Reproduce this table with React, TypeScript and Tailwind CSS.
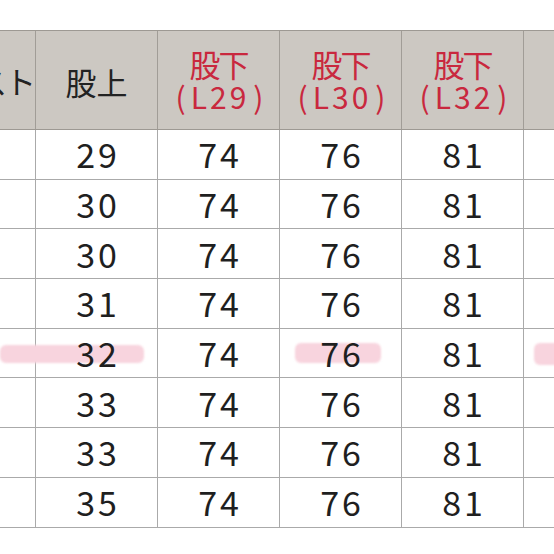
import React from "react";

const rows = [29, 30, 30, 31, 32, 33, 33, 35];

const font = { fontFamily: '"Noto Sans CJK JP", "Noto Sans", sans-serif' };

function Marker({ className }: { className: string }) {
  return (
    <span
      className={`absolute rounded-[6px] bg-[#f8d4de] blur-[1px] ${className}`}
    />
  );
}

export default function App() {
  return (
    <div className="w-[554px] h-[554px] overflow-hidden bg-white" style={font}>
      <div className="pt-[30px]">
        {/* header */}
        <div className="flex h-[100px] bg-[#ccc8c2] border-y border-[#9d9993] text-[31px] leading-[31px]">
          <div className="w-[36px] shrink-0 border-r border-[#a19d97] flex items-center justify-end overflow-hidden">
            <span className="whitespace-nowrap text-[#222] pr-[1px] tracking-[-2px]">ウエスト</span>
          </div>
          <div className="w-[122px] shrink-0 border-r border-[#a19d97] flex items-center justify-center text-[#222] pt-[2px]">
            股上
          </div>
          {["L29", "L30", "L32"].map((l) => (
            <div
              key={l}
              className="w-[122px] shrink-0 border-r border-[#a19d97] flex flex-col items-center justify-center text-[#c9283e] pt-[2px]"
            >
              <span className="text-[31px] leading-[30px] tracking-[-2px]">股下</span>
              <span className="text-[30px] leading-[34px] pl-[2px]">
                (<span className="ml-[5px] mr-[4px] tracking-[3px]">{l}</span>)
              </span>
            </div>
          ))}
          <div className="flex-1" />
        </div>
        {/* body */}
        {rows.map((v, i) => (
          <div
            key={i}
            className="relative flex h-[49.7px] border-b border-[#aaaaaa] text-[34px] leading-none text-[#1f1f1f] tracking-[3px]"
          >
            {i === 4 && (
              <>
                <Marker className="left-0 top-[16px] w-[144px] h-[18px]" />
                <Marker className="left-[295px] top-[14px] w-[86px] h-[20px]" />
                <Marker className="left-[534px] top-[14px] w-[40px] h-[22px]" />
              </>
            )}
            <div className="w-[36px] shrink-0 border-r border-[#aaaaaa]" />
            {[v, 74, 76, 81].map((n, j) => (
              <div
                key={j}
                className="relative w-[122px] shrink-0 border-r border-[#aaaaaa] flex items-center justify-center pl-[3px]"
              >
                {n}
              </div>
            ))}
            <div className="flex-1" />
          </div>
        ))}
      </div>
    </div>
  );
}
